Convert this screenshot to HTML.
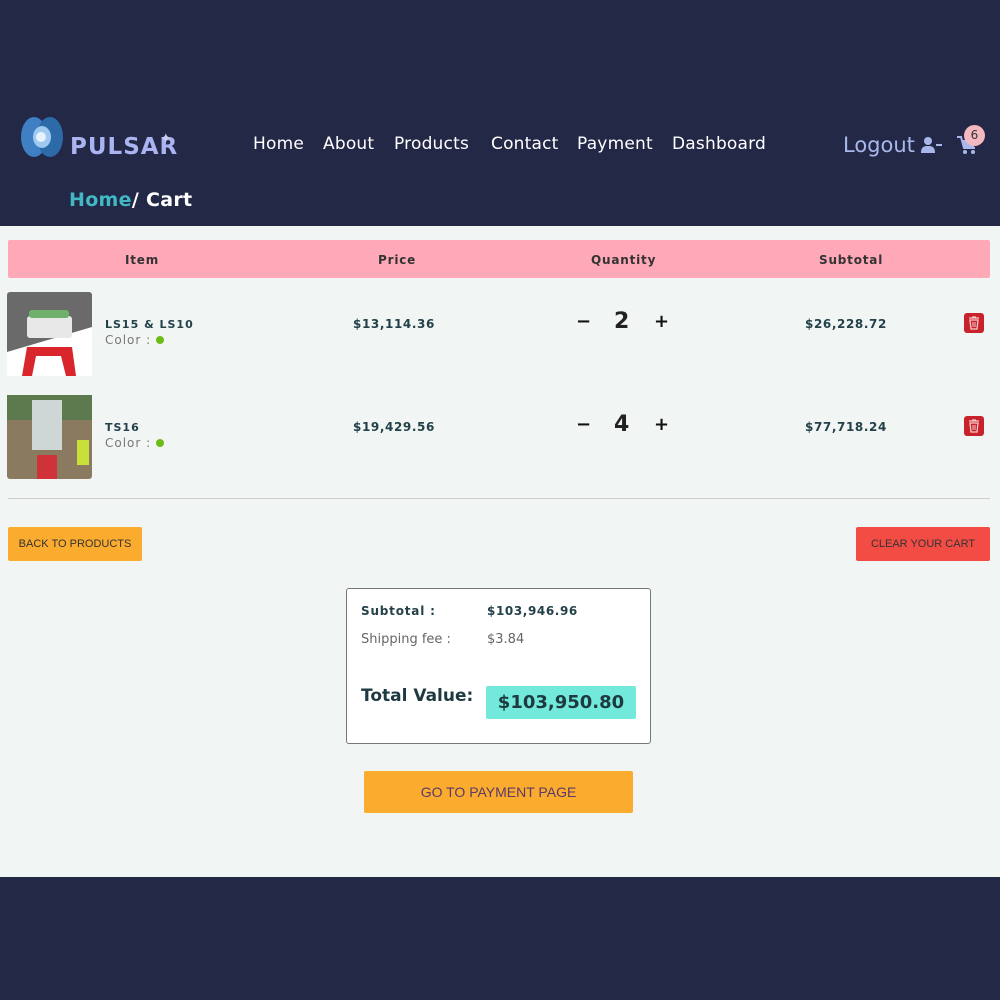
<!DOCTYPE html>
<html><head><meta charset="utf-8"><style>
*{margin:0;padding:0;box-sizing:border-box}
body{width:1000px;height:1000px;background:#242847;font-family:"DejaVu Sans","Liberation Sans",sans-serif;position:relative;overflow:hidden}
.a{position:absolute}
.main{position:absolute;left:0;top:226px;width:1000px;height:651px;background:#f1f5f4}
.nav a{position:absolute;top:134px;color:#fff;font-size:17px;letter-spacing:.2px}
.th{position:absolute;top:253px;font-size:12px;font-weight:bold;color:#333;letter-spacing:.8px}
.nm{font-size:11px;font-weight:bold;color:#24414a;letter-spacing:1px;margin-bottom:2px}
.col{font-size:12px;color:#777;letter-spacing:1px}
.dot{display:inline-block;width:8px;height:8px;border-radius:50%;background:#6cbb17;margin-left:5px}
.pr{position:absolute;font-size:12px;font-weight:bold;color:#24414a;letter-spacing:.6px}
.q{position:absolute;font-size:22px;font-weight:bold;color:#222}
.pm{position:absolute;font-size:18px;font-weight:bold;color:#111}
.tr{position:absolute}
</style></head><body>
<svg class="a" style="left:20px;top:115px" width="44" height="44" viewBox="0 0 44 44">
<ellipse cx="14" cy="22" rx="13" ry="20" fill="#3f7fc4"/><ellipse cx="30" cy="22" rx="13" ry="20" fill="#2d6aa8"/>
<ellipse cx="22" cy="22" rx="9" ry="11" fill="#9fc9ef"/><circle cx="21" cy="22" r="5" fill="#e6f3ff"/></svg>
<div class="a" style="left:70px;top:134px;font-size:23px;font-weight:bold;color:#a9b4f0;letter-spacing:1px">PULSAR</div>
<div class="a" style="left:160px;top:131px;color:#cce;font-size:14px">✦</div>
<div class="nav"><a style="left:253px">Home</a><a style="left:323px">About</a><a style="left:394px">Products</a><a style="left:491px">Contact</a><a style="left:577px">Payment</a><a style="left:672px">Dashboard</a></div>
<div class="a" style="left:843px;top:133px;font-size:21px;color:#a9b8ea">Logout</div>
<svg class="a" style="left:921px;top:136px" width="22" height="18" viewBox="0 0 22 18"><circle cx="7" cy="5" r="4" fill="#a9b8ea"/><path d="M0 17c0-6 3-7 7-7s7 1 7 7z" fill="#a9b8ea"/><rect x="15" y="8" width="6" height="2" fill="#a9b8ea"/></svg>
<svg class="a" style="left:956px;top:134px" width="22" height="22" viewBox="0 0 22 22"><path d="M1 3h4l3 11h11" fill="none" stroke="#a9b8ea" stroke-width="2"/><path d="M6 6h14l-2 7H8z" fill="#a9b8ea"/><circle cx="9" cy="18" r="2" fill="#a9b8ea"/><circle cx="17" cy="18" r="2" fill="#a9b8ea"/></svg>
<div class="a" style="left:964px;top:125px;width:21px;height:21px;border-radius:50%;background:#f4b8c0;color:#333;font-size:12px;text-align:center;line-height:21px">6</div>
<div class="a" style="left:69px;top:189px;font-size:19px;font-weight:bold;color:#fff;letter-spacing:.3px"><span style="color:#40b9c4">Home</span>/ Cart</div>
<div class="main"></div>
<div class="a" style="left:8px;top:240px;width:982px;height:38px;background:#ffa8b8;border-radius:2px"></div>
<div class="th" style="left:125px">Item</div><div class="th" style="left:378px">Price</div><div class="th" style="left:591px">Quantity</div><div class="th" style="left:819px">Subtotal</div>
<svg class="a" style="left:7px;top:292px" width="85" height="84"><rect width="85" height="84" rx="3" fill="#6a6a6a"/><path d="M0 60L85 35V84H0z" fill="#fff"/><rect x="20" y="24" width="45" height="22" rx="3" fill="#e8e8e8"/><rect x="22" y="18" width="40" height="8" rx="3" fill="#6fb06a"/><path d="M20 55h45l4 29h-10l-5-20h-25l-4 20h-10z" fill="#d8262c"/></svg>
<div class="a" style="left:105px;top:318px"><div class="nm">LS15 &amp; LS10</div><div class="col">Color :<span class="dot"></span></div></div>
<div class="pr" style="left:353px;top:317px">$13,114.36</div>
<div class="pm" style="left:576px;top:311px">−</div><div class="q" style="left:614px;top:309px">2</div><div class="pm" style="left:654px;top:311px">+</div>
<div class="pr" style="left:805px;top:317px">$26,228.72</div>
<svg class="tr" style="left:964px;top:313px" width="20" height="20"><rect width="20" height="20" rx="3" fill="#c8232c"/><path d="M5 5h10M8 4h4M6 7h8l-1 9H7z" fill="none" stroke="#f6caca" stroke-width="1.3"/><path d="M9 9v5M11 9v5" stroke="#f6caca"/></svg>
<svg class="a" style="left:7px;top:395px" width="85" height="84"><rect width="85" height="84" rx="3" fill="#8a7a60"/><rect width="85" height="25" fill="#5c7a4e"/><rect x="25" y="5" width="30" height="50" fill="#cfd6d6"/><rect x="30" y="60" width="20" height="24" fill="#d0323a"/><rect x="70" y="45" width="12" height="25" fill="#c8e03a"/></svg>
<div class="a" style="left:105px;top:421px"><div class="nm">TS16</div><div class="col">Color :<span class="dot"></span></div></div>
<div class="pr" style="left:353px;top:420px">$19,429.56</div>
<div class="pm" style="left:576px;top:414px">−</div><div class="q" style="left:614px;top:412px">4</div><div class="pm" style="left:654px;top:414px">+</div>
<div class="pr" style="left:805px;top:420px">$77,718.24</div>
<svg class="tr" style="left:964px;top:416px" width="20" height="20"><rect width="20" height="20" rx="3" fill="#c8232c"/><path d="M5 5h10M8 4h4M6 7h8l-1 9H7z" fill="none" stroke="#f6caca" stroke-width="1.3"/><path d="M9 9v5M11 9v5" stroke="#f6caca"/></svg>
<div class="a" style="left:8px;top:498px;width:982px;height:1px;background:#ccc"></div>
<div class="a" style="left:8px;top:527px;width:134px;height:34px;background:#fbab2e;border-radius:2px;font:11px 'Liberation Sans',sans-serif;color:#333;text-align:center;line-height:34px">BACK TO PRODUCTS</div>
<div class="a" style="left:856px;top:527px;width:134px;height:34px;background:#f34c44;border-radius:2px;font:11px 'Liberation Sans',sans-serif;color:#333;text-align:center;line-height:34px">CLEAR YOUR CART</div>
<div class="a" style="left:346px;top:588px;width:305px;height:156px;background:#fff;border:1px solid #777;border-radius:3px"></div>
<div class="a" style="left:361px;top:604px;font-size:12px;font-weight:bold;color:#24414a;letter-spacing:.8px">Subtotal :</div>
<div class="a" style="left:487px;top:604px;font-size:12px;font-weight:bold;color:#24414a;letter-spacing:.6px">$103,946.96</div>
<div class="a" style="left:361px;top:632px;font-size:13px;color:#666">Shipping fee :</div>
<div class="a" style="left:487px;top:632px;font-size:13px;color:#666">$3.84</div>
<div class="a" style="left:361px;top:686px;font-size:17px;font-weight:bold;color:#1d3a40;white-space:nowrap">Total Value:</div>
<div class="a" style="left:486px;top:686px;width:150px;height:33px;background:#72e9da;border-radius:2px;font-size:18px;font-weight:bold;color:#1d3a40;text-align:center;line-height:33px">$103,950.80</div>
<div class="a" style="left:364px;top:771px;width:269px;height:42px;background:#fbab2e;border-radius:2px;font:14px 'Liberation Sans',sans-serif;color:#5a3a6a;text-align:center;line-height:42px">GO TO PAYMENT PAGE</div>
</body></html>
